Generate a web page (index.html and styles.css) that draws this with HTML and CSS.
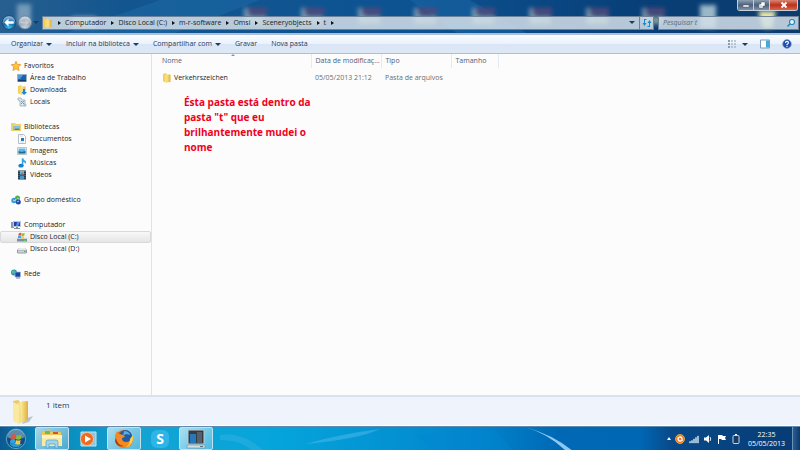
FILE: index.html
```html
<!DOCTYPE html>
<html lang="pt-BR">
<head>
<meta charset="utf-8">
<meta name="viewport" content="width=device-width, initial-scale=1">
<title>t</title>
<link rel="stylesheet" href="styles.css">
</head>
<body>
<svg class="defs" aria-hidden="true">
  <defs>
    <linearGradient id="gold" x1="0" x2="1"><stop offset="0" stop-color="#fff0a0"/><stop offset="1" stop-color="#e0ae3c"/></linearGradient>
    <radialGradient id="orbBlue" cx=".5" cy=".9" r=".9"><stop offset="0" stop-color="#39c4f0"/><stop offset=".5" stop-color="#1268ac"/><stop offset="1" stop-color="#a9cbe6"/></radialGradient>
    <radialGradient id="orbGrey" cx=".5" cy=".9" r=".9"><stop offset="0" stop-color="#c9d3db"/><stop offset=".5" stop-color="#9aa8b6"/><stop offset="1" stop-color="#dce4ea"/></radialGradient>
    <filter id="soft" x="-30%" y="-30%" width="160%" height="160%"><feGaussianBlur stdDeviation="2"/></filter>
    <g id="glass"><path d="M0 8h6v16h-6z" fill="#b3c6cb" opacity=".6"/><path d="M3 8h20v7h-20z" fill="#54487a" opacity=".9"/><path d="M4 17h18v7h-18z" fill="#b7c6a5" opacity=".7"/></g>
    <symbol id="folder" viewBox="0 0 10 10"><path d="M1 1l3-.8 1 1V9.5L1 8.5z" fill="#f2cd55"/><path d="M4 1.5h4.5V9L4 9.6z" fill="url(#gold)"/><path d="M2.5 2L5 1.3V9.7L2.5 9z" fill="#f9dc76"/></symbol>
    <symbol id="pc" viewBox="0 0 10 10"><path d="M0 2h3v6H0z" fill="#8c9ba7"/><path d="M2 1h8v6H2z" fill="#b8c9d6"/><path d="M3 2h6v4H3z" fill="#1a3fb4"/><path d="M6 2h3L7 6H5z" fill="#5a8ee8"/><path d="M5 7h2v1h2v1H3V8h2z" fill="#7e8d9a"/></symbol>
    <symbol id="flag4" viewBox="0 0 10 10"><path d="M1 2q2-1.500 4-.5L4.400 5q-2-1-4 .3z" fill="#e9542c"/><path d="M5.500 1.700q2 1 4-.2L9 5q-2 1-4 .2z" fill="#83bd3b"/><path d="M.4 5.800q2-1.300 4-.3L3.800 9q-2-1-4 .2z" fill="#35a0e6"/><path d="M4.900 5.800q2 1 4 0L8.300 9.100q-2 1.100-4 .2z" fill="#fbc83b"/></symbol>
  </defs>
</svg>

<header class="glass-bar">
  <svg class="wallpaper" viewBox="0 0 800 35" preserveAspectRatio="xMinYMin slice" aria-hidden="true">
    <path d="M160 0h100l-90 35H60z" fill="#2379ba" opacity=".3"/>
    <path d="M410 0h60l60 35h-70z" fill="#2379ba" opacity=".3"/>
    <g filter="url(#soft)">
      <path d="M17 4h14v20H17z" fill="#a8c3d4" opacity=".6"/><path d="M72 17h24v10H72z" fill="#fff" opacity=".6"/>
      <use href="#glass" x="244"/><use href="#glass" x="301"/><use href="#glass" x="358"/><use href="#glass" x="414"/><use href="#glass" x="472"/><use href="#glass" x="529"/><use href="#glass" x="586"/><use href="#glass" x="642"/>
      <path d="M700 5h16v23h-16z" fill="#bed6dd" opacity=".8"/><path d="M758 11h18l-4 17h-9z" fill="#e8e7a5"/>
    </g>
  </svg>
  <div class="captions">
    <button class="cap" aria-label="Minimizar"><svg viewBox="0 0 8 8"><path d="M1 4h6v2H1z" fill="#fff" stroke="#4c5a6c" stroke-width=".5"/></svg></button>
    <button class="cap" aria-label="Restaurar"><svg viewBox="0 0 8 8"><path d="M3 1h4v4H5v2H1V3h2z" fill="#fff" stroke="#4c5a6c" stroke-width=".5"/><path d="M2.500 4.500h1v1h-1z" fill="#4c5a6c"/></svg></button>
    <button class="cap cap-close" aria-label="Fechar"><svg viewBox="0 0 8 8"><path d="M1.500 1.500l5 5m0-5l-5 5" stroke="#fff" stroke-width="1.800"/></svg></button>
  </div>
  <div class="nav-row">
    <div class="history">
      <button aria-label="Voltar"><svg viewBox="0 0 16 16"><circle cx="8" cy="8" r="7.300" fill="url(#orbBlue)" stroke="#174978"/><path d="M3 8l4.500-4.300v2.900h5.500v2.800H7.500v2.900z" fill="#fff"/></svg></button>
      <button aria-label="Avançar"><svg viewBox="0 0 16 16"><circle cx="8" cy="8" r="7" fill="url(#orbGrey)" stroke="#66809a"/><path d="M12.500 8l-4-3.500v2.400h-5v2.200h5v2.400z" fill="#c2cdd6"/></svg></button>
      <button class="recent" aria-label="Páginas recentes"><span class="down"></span></button>
    </div>
    <nav class="address" aria-label="Endereço">
      <svg class="ico" viewBox="0 0 10 10"><use href="#folder"/></svg>
      <ol>
        <li><a href="#">Computador</a></li>
        <li><a href="#">Disco Local (C:)</a></li>
        <li><a href="#">m-r-software</a></li>
        <li><a href="#">Omsi</a></li>
        <li><a href="#">Sceneryobjects</a></li>
        <li><a href="#">t</a></li>
      </ol>
      <button class="drop" aria-label="Locais anteriores"><span class="down"></span></button>
      <button class="refresh" aria-label="Atualizar"><svg viewBox="0 0 10 10"><path d="M4.500 1H2v4H.5L2.500 8l2-3H3V2h1.500zM5.500 9H8V5h1.500L7.500 2l-2 3H7v3H5.500z" fill="#168bd2"/></svg></button>
    </nav>
    <div class="search">
      <input type="search" aria-label="Pesquisar t" placeholder="Pesquisar t">
      <svg class="ico" viewBox="0 0 10 10"><circle cx="6" cy="4" r="2.500" fill="#e6f4fb" stroke="#2785bd" stroke-width="1.200"/><path d="M4 6L1.500 8.500" stroke="#2785bd" stroke-width="1.600"/></svg>
    </div>
  </div>
</header>

<div class="toolbar">
  <button>Organizar<span class="down"></span></button>
  <button>Incluir na biblioteca<span class="down"></span></button>
  <button>Compartilhar com<span class="down"></span></button>
  <button>Gravar</button>
  <button>Nova pasta</button>
  <div class="tools">
    <button aria-label="Modo de exibição"><svg class="ico" viewBox="0 0 10 10"><path d="M1 1h2v2H1zM1 4h2v2H1zM1 7h2v2H1z" fill="#8b9fae"/><path d="M4 2h2M7 2h2M4 5h2M7 5h2M4 8h2M7 8h2" stroke="#8b9fae"/></svg><span class="down"></span></button>
    <button aria-label="Painel de visualização"><svg class="ico" viewBox="0 0 10 10"><path d="M.5 1h9v8h-9z" fill="#fff" stroke="#7b9cb8"/><path d="M6 1.500h3v7H6z" fill="#45a9d8"/></svg></button>
    <button aria-label="Ajuda"><svg class="ico" viewBox="0 0 10 10"><circle cx="5" cy="5" r="4.400" fill="#1e4fb0" stroke="#8fa9c9" stroke-width=".7"/><path d="M3.500 3.900q0-1.500 1.500-1.500t1.500 1.400q0 .8-1.500 1.600V6.200M5 7v1" fill="none" stroke="#fff" stroke-width="1.100"/></svg></button>
  </div>
</div>

<main class="explorer">
  <nav class="tree" aria-label="Painel de navegação">
    <ul>
      <li><a href="#"><svg class="ico" viewBox="0 0 10 10"><path d="M5 .3l1.400 3.100 3.400.3-2.600 2.200.9 3.600L5 7.700 1.900 9.500l.9-3.600L.2 3.700l3.400-.3z" fill="#ffc43a" stroke="#e38b17" stroke-width=".7"/></svg>Favoritos</a>
        <ul>
          <li><a href="#"><svg class="ico" viewBox="0 0 10 10"><path d="M.5 1.500h9v7h-9z" fill="#1c5fae" stroke="#98b3c9"/><path d="M1 2h5L3 6H1z" fill="#4a9dd8"/><path d="M1 7h8v1.500H1z" fill="#173b66"/></svg>Área de Trabalho</a></li>
          <li><a href="#"><svg class="ico" viewBox="0 0 10 10"><use href="#folder"/><path d="M6 4h2v3h2L7 10 4.500 7H6z" fill="#1e84d8"/></svg>Downloads</a></li>
          <li><a href="#"><svg class="ico" viewBox="0 0 10 10"><path d="M1 1h3l1 2h3v6H3V4L1 3z" fill="#dce5ea" stroke="#91a4b0" stroke-width=".7"/><path d="M4 4l3 3M7 4L4 7" stroke="#8099a8"/><circle cx="8" cy="8" r="1.500" fill="#afbdc5"/></svg>Locais</a></li>
        </ul>
      </li>
      <li><a href="#"><svg class="ico" viewBox="0 0 10 10"><path d="M0 1h4l1 1h5v7H0z" fill="#f1d070"/><path d="M2 4h7v4H2z" fill="#79c7e8"/><path d="M3 8l2-2 1 1 1-1 2 2z" fill="#4d994a"/></svg>Bibliotecas</a>
        <ul>
          <li><a href="#"><svg class="ico" viewBox="0 0 10 10"><path d="M1.500.5h5l2 2v7h-7z" fill="#fff" stroke="#a1afba" stroke-width=".8"/><path d="M4 4h3v3H4z" fill="#2977b6"/><path d="M3 2h3M3 8h4" stroke="#b0bec9" stroke-width=".6"/></svg>Documentos</a></li>
          <li><a href="#"><svg class="ico" viewBox="0 0 10 10"><path d="M.5 1.500h9v7h-9z" fill="#fff" stroke="#a9b7c0" stroke-width=".8"/><path d="M1.500 2.500h7v5h-7z" fill="#58b7df"/><path d="M1.500 5l3 1 4-1v2.500h-7z" fill="#176c91"/></svg>Imagens</a></li>
          <li><a href="#"><svg class="ico" viewBox="0 0 10 10"><path d="M4.800.3h1.500q.3 2 2.500 2.700.7 1.500-.5 3 .1-1.500-2-2V8H4.800z" fill="#35a6e4"/><ellipse cx="4" cy="7.700" rx="2.700" ry="1.900" fill="#1580cf"/></svg>Músicas</a></li>
          <li><a href="#"><svg class="ico" viewBox="0 0 10 10"><path d="M1 .5h8v9H1z" fill="#26374a"/><path d="M3 1h4v3.500H3z" fill="#59bfe9"/><path d="M3 5.500h4V9H3z" fill="#4696c6"/><path d="M5 2l2 2.500H4z" fill="#c15f3e"/><path d="M2 1v8M8 1v8" stroke="#8598a8" stroke-width=".8" stroke-dasharray="1 1"/></svg>Vídeos</a></li>
        </ul>
      </li>
      <li><a href="#"><svg class="ico" viewBox="0 0 10 10"><circle cx="3" cy="5.500" r="2.700" fill="#3a9ad8"/><circle cx="6.500" cy="3" r="2.500" fill="#4cb04b"/><circle cx="7.300" cy="7" r="2.500" fill="#1c4bad"/><path d="M2 5l2 1 1-2M6 3l2 1M6 7l2-1" stroke="#d3f1ed" stroke-width=".8" fill="none"/></svg>Grupo doméstico</a></li>
      <li><a href="#"><svg class="ico" viewBox="0 0 10 10"><use href="#pc"/></svg>Computador</a>
        <ul>
          <li><a href="#" class="current" aria-current="true"><svg class="ico" viewBox="0 0 10 10"><path d="M1 6h8l1 1v2.500H0V7z" fill="#7c909d"/><path d="M1 6h8l1 1H0z" fill="#ccd6db"/><path d="M7 8h2v1H7z" fill="#43dc54"/><use href="#flag4" width="7" height="7" x="1"/></svg>Disco Local (C:)</a></li>
          <li><a href="#"><svg class="ico" viewBox="0 0 10 10"><path d="M2 4h6l2 2v2.500L9 9.500H1L0 8.500V6z" fill="#929da1"/><path d="M2 4h6l1.500 2H.5z" fill="#e6eaeb"/><path d="M1 6.500h8V8.500H1z" fill="#d1d8da"/><path d="M7 7h1.500v1H7z" fill="#42b84b"/></svg>Disco Local (D:)</a></li>
        </ul>
      </li>
      <li><a href="#"><svg class="ico" viewBox="0 0 10 10"><circle cx="3" cy="3.500" r="3" fill="#2491c7"/><path d="M1 2l3-1-1 3-2 1z" fill="#60c475"/><path d="M4 3h5.500v5H4z" fill="#1642aa" stroke="#a5bdd0" stroke-width=".7"/><path d="M5 9h4" stroke="#738797"/></svg>Rede</a></li>
    </ul>
  </nav>
  <section class="files">
    <table>
      <colgroup><col class="c-name"><col class="c-date"><col class="c-type"><col class="c-size"><col></colgroup>
      <thead><tr><th class="sorted">Nome</th><th>Data de modificaç...</th><th>Tipo</th><th>Tamanho</th><td></td></tr></thead>
      <tbody><tr><td class="name"><span><svg class="ico" viewBox="0 0 10 10"><use href="#folder"/></svg>Verkehrszeichen</span></td><td>05/05/2013 21:12</td><td>Pasta de arquivos</td><td></td><td></td></tr></tbody>
    </table>
    <p class="note">Ésta pasta está dentro da pasta "t" que eu brilhantemente mudei o nome</p>
  </section>
</main>

<footer class="details">
  <svg class="big-folder" viewBox="0 0 22 26"><path d="M12 20l9-3-4 6-7 2z" fill="#7d8c9a" opacity=".45"/><path d="M1 2l5-1 2 2v21l-7-3z" fill="#e9ca67"/><path d="M5 4l8-2v20l-7 3z" fill="#f5df8d"/><path d="M8 3l8-1v19l-6 2z" fill="url(#gold)"/><path d="M1 3l6 3v19l-6-3z" fill="#fae99f"/></svg>
  <span>1 item</span>
</footer>

<div class="taskbar">
  <svg class="wallpaper" viewBox="0 0 800 25" preserveAspectRatio="xMinYMin slice" aria-hidden="true">
    <path d="M220 8q25-3 45 17h-12q-10-12-33-12z" fill="#50b9e5" opacity=".3"/>
    <path d="M305 17q35-10 75-15-20 10-75 15z" fill="#65c2ee" opacity=".4"/>
    <path d="M415 8q40-5 80-5l20 22h-80z" fill="#0387d0" opacity=".35"/>
    <path d="M525 0q29 8 49 25h-7Q549 7 525 0z" fill="#8bc8f2"/>
  </svg>
  <button class="start" aria-label="Iniciar"><svg viewBox="0 0 24 24"><circle cx="12" cy="12" r="10.500" fill="#174c80" stroke="#6aa9c7"/><path d="M2.500 10a9.500 9.500 0 0 1 19 0q-9 4-19 0z" fill="#a8c8da" opacity=".5"/><path d="M5 18q7 6 14 0-7-4-14 0z" fill="#27aee4" opacity=".8"/><use href="#flag4" x="5.500" y="5.500" width="13" height="13"/></svg></button>
  <button class="task open" aria-label="Windows Explorer"><svg viewBox="0 0 22 20"><path d="M1 3l7-2 2 2h10v14H1z" fill="#edc75a"/><path d="M4 2h5v3H4z" fill="#6fb957"/><path d="M12 3h5v2h-5z" fill="#d5542f"/><path d="M1 6h20v11H1z" fill="#fae9a0"/><path d="M1 6h20v3H1z" fill="#fff4c5"/><path d="M5 19v-6q0-2 2-2h8q2 0 2 2v6h-3v-4H8v4z" fill="#9dd5ee" stroke="#599fc7" stroke-width=".7"/></svg></button>
  <button class="task" aria-label="Windows Media Player"><svg viewBox="0 0 22 20"><path d="M4 3h15v14H4z" fill="#8dc5e2" stroke="#bfe3f2"/><circle cx="10" cy="10" r="6.500" fill="#ed6c1f" stroke="#ffd0a0" stroke-width=".7"/><path d="M8 6.500l6 3.500-6 3.500z" fill="#fff"/></svg></button>
  <button class="task open" aria-label="Firefox"><svg viewBox="0 0 22 20"><circle cx="11" cy="10" r="9" fill="#e45b19"/><circle cx="12.500" cy="7.500" r="6.500" fill="#205ba6"/><path d="M11 2q5 0 6 4l-4-1-3 2z" fill="#57afe0"/><path d="M2 6l2-4 2 3q4 0 6 3l-3 1q0 4 4 4t7-4q0 8-6 9.500Q5 20 2.500 13z" fill="#f18b22"/><path d="M20 6q1 10-8 13 5-3 5-9z" fill="#ffd14c"/><path d="M3 9q1 7 8 8-7 2-9-5z" fill="#b9321c"/></svg></button>
  <button class="task skype" aria-label="Skype"><span>S</span></button>
  <button class="task open" aria-label="Aplicativo"><svg viewBox="0 0 22 20"><path d="M3 1h16v14H3z" fill="#343d46" stroke="#c1cbd1"/><path d="M5 5h6v9H5z" fill="#2678b9"/><path d="M12 3h5v11h-5z" fill="#566069"/><path d="M2 16h18v3H2z" fill="#d6dcdf" stroke="#7b8992" stroke-width=".6"/><path d="M15 17.500h3" stroke="#636f77"/></svg></button>
  <div class="tray">
    <button aria-label="Mostrar ícones ocultos"><span class="up"></span></button>
    <button aria-label="Avast"><svg class="ico" viewBox="0 0 10 10"><circle cx="5" cy="5" r="4.500" fill="#f5761a" stroke="#ffc04e" stroke-width=".7"/><path d="M7 7V4.500A2 2 0 1 0 5.500 7q1 0 1.500-1" stroke="#fff" stroke-width="1.300" fill="none"/></svg></button>
    <button aria-label="Rede"><svg class="ico" viewBox="0 0 10 10"><path d="M.5 7.500h1V9h-1zM2.500 6.500h1V9h-1zM4.500 5h1v4h-1zM6.500 3.500h1V9h-1zM8.500 2h1v7h-1z" fill="#dbe8f3" stroke="#dbe8f3" stroke-width=".4"/></svg></button>
    <button aria-label="Volume"><svg class="ico" viewBox="0 0 10 10"><path d="M1 3.500h2L6 1v8L3 6.500H1z" fill="#f5f9fc"/><path d="M7 3q1.500 2 0 4" fill="none" stroke="#d5e4f1"/></svg></button>
    <button aria-label="Central de Ações"><svg class="ico" viewBox="0 0 10 10"><path d="M1.500 1v9" stroke="#fff"/><path d="M2 1h3l1 1h3L8 4l1 2H5L4 5H2z" fill="#fff"/></svg></button>
    <button aria-label="Bateria"><svg class="ico" viewBox="0 0 10 10"><path d="M3 1.500h4q1 0 1 1v6q0 1-1 1H3q-1 0-1-1v-6q0-1 1-1z" fill="#173c63" stroke="#c6d6e4"/><path d="M4 .5h2" stroke="#fff"/></svg></button>
  </div>
  <button class="clock"><time>22:35</time><time>05/05/2013</time></button>
  <button class="show-desktop" aria-label="Mostrar área de trabalho"></button>
</div>
</body>
</html>
```
FILE: styles.css
```css
* { box-sizing: border-box; }

body {
  margin: 0;
  min-height: 100vh;
  display: flex;
  flex-direction: column;
  font: 7px/12px "Open Sans", "Noto Sans", sans-serif;
  color: #1c1c1c;
  background: #fcfcfc;
}

button, input {
  font: inherit;
  color: inherit;
  padding: 0;
  border: 0;
  background: none;
}

button { display: flex; align-items: center; justify-content: center; }
a { color: inherit; text-decoration: none; }
ul, ol { list-style: none; margin: 0; padding: 0; }
svg { display: block; flex: none; }
.defs { position: absolute; width: 0; height: 0; }
.ico { width: 10px; height: 10px; }

.down, .up {
  border: 3px solid transparent;
  border-top: 3px solid #1d3c5f;
  border-bottom: 0;
}
.up { border-width: 0 2px 3px; border-bottom: 3px solid #fff; }

.wallpaper { position: absolute; inset: 0; width: 100%; height: 100%; z-index: -1; }

/* Title bar and address row */
.glass-bar {
  position: relative;
  z-index: 0;
  height: 35px;
  padding: 15px 1px 0 0;
  background: linear-gradient(90deg, #285f8f, #13568f 15%, #0d5392 50%, #083f78 80%, #0c3c6c);
  border-bottom: 2px solid #aebfd6;
}

.captions {
  position: absolute;
  top: 0;
  right: 2px;
  display: flex;
  border: 1px solid #c6cfda;
  border-top: 0;
  border-radius: 0 0 3px 3px;
  overflow: hidden;
}
.cap { width: 16px; height: 10px; background: linear-gradient(#8f9fb2, #4b617c 50%, #8094a9); border-right: 1px solid #c6cfda; }
.cap svg { width: 8px; height: 8px; }
.cap-close { width: 27px; border: 0; background: linear-gradient(#d98672, #bd301b 50%, #d9684a); }

.nav-row { display: flex; align-items: center; gap: 4px; }
.history { display: flex; align-items: center; width: 38px; padding-left: 1px; }
.history svg { width: 16px; height: 15px; }
.recent { width: 6px; }

.address, .search {
  display: flex;
  align-items: center;
  height: 14px;
  border: 1px solid #6e8399;
  background: rgb(211 222 232 / .86);
}
.address { flex: 1; }
.address ol { display: flex; align-items: center; flex: 1; }
.address li { display: flex; align-items: center; }
.address li::after, .address ol::before {
  content: "";
  border: 2px solid transparent;
  border-left: 3px solid #111;
  border-right: 0;
  margin: 0 4px 0 5px;
}
.address a { line-height: 12px; }
.drop { width: 14px; height: 12px; }
.refresh { width: 14px; height: 12px; border-left: 1px solid #6e8399; }
.refresh svg { width: 10px; height: 10px; }

.search { width: 141px; padding: 0 2px 0 4px; }
.search input { flex: 1; min-width: 0; height: 12px; outline: 0; appearance: none; }
.search input::placeholder { color: #616b74; font-style: italic; opacity: 1; }

/* Command bar */
.toolbar {
  display: flex;
  align-items: center;
  gap: 14px;
  height: 19px;
  padding: 0 8px 0 11px;
  color: #1e395b;
  background: linear-gradient(#fafcff, #eaf2fc 48%, #dae6f5 52%, #dce8f6);
  border-bottom: 1px solid #a9c0da;
}
.toolbar button { gap: 3px; }
.tools { display: flex; gap: 12px; margin-left: auto; }
.tools button:first-child { gap: 5px; }

/* Explorer body */
.explorer { flex: 1; display: flex; }
.tree { width: 152px; padding-top: 6px; border-right: 1px solid #d6e5f5; }
.tree > ul { display: flex; flex-direction: column; gap: 13px; }
.tree a {
  display: flex;
  align-items: center;
  gap: 3px;
  height: 12px;
  padding-left: 10px;
  border: 1px solid transparent;
}
.tree ul ul a { padding-left: 16px; }
.tree .current {
  border-color: #d9d9d9;
  border-radius: 2px;
  background: linear-gradient(#f8f8f8, #e5e5e5);
}

.files { flex: 1; }
table { width: 100%; table-layout: fixed; border-collapse: collapse; }
.c-name { width: 159px; }
.c-date, .c-type { width: 70px; }
.c-size { width: 47px; }
th {
  position: relative;
  height: 14px;
  padding: 0 0 0 4px;
  text-align: left;
  font-weight: 400;
  color: #4c607a;
  border-right: 1px solid #e2ebf5;
  white-space: nowrap;
}
th:first-child { padding-left: 10px; }
.sorted::after {
  content: "";
  position: absolute;
  top: 0;
  left: 50%;
  border: 2px solid transparent;
  border-top: 0;
  border-bottom-color: #6e9abb;
}
tbody td { height: 20px; padding: 0 0 0 4px; color: #6d6d6d; white-space: nowrap; }
tbody .name { padding-left: 10px; color: #1c1c1c; }
.name span { display: flex; align-items: center; gap: 2px; }

.note {
  width: 136px;
  margin: 7px 0 0 32px;
  font-size: 10px;
  line-height: 15px;
  font-weight: 700;
  color: #f0001c;
}

/* Details pane */
.details {
  display: flex;
  gap: 12px;
  height: 31px;
  padding: 2px 0 0 12px;
  color: #1e395b;
  background: #eff4fc;
  border-top: 2px solid #d7e4f0;
  border-bottom: 1px solid #fff;
}
.details span { font-size: 8px; line-height: 12px; }
.big-folder { width: 22px; height: 26px; }

/* Taskbar */
.taskbar {
  position: relative;
  z-index: 0;
  display: flex;
  height: 24px;
  background: linear-gradient(90deg, #0b5a91, #0787ba 5%, #14a3d3 18%, #05a5dc 34%, #0284cc 60%, #0068b5 70%, #0067b4 80%, #084989 84%, #073b74);
  border-top: 1px solid #618bad;
}
.start { width: 32px; margin-right: 3px; }
.start svg { width: 22px; height: 22px; }
.task { width: 34px; margin-right: 2px; }
.task svg { width: 22px; height: 20px; }
.open {
  border: 1px solid #c5e1ee;
  border-radius: 2px;
  background: linear-gradient(135deg, rgb(255 255 255 / .65), rgb(255 255 255 / .25));
}
.skype span {
  width: 18px;
  height: 18px;
  border-radius: 6px;
  background: #2fb4e8;
  color: #fff;
  font-size: 14px;
  line-height: 18px;
  font-weight: 700;
}
.tray { display: flex; gap: 4px; margin-left: auto; }
.clock {
  width: 51px;
  flex-direction: column;
  color: #fff;
  line-height: 9px;
}
.show-desktop { width: 8px; border-left: 1px solid #6c91b6; background: linear-gradient(90deg, #2c5c8f, #0a3b70); }
```
